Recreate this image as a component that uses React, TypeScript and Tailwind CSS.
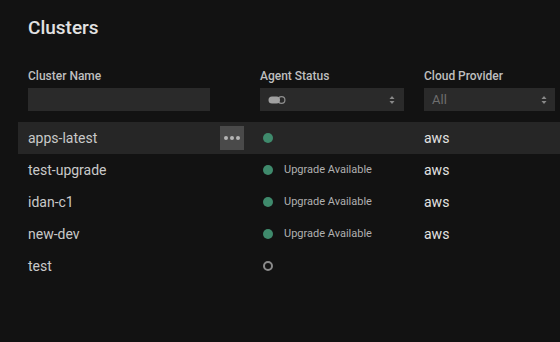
import React from "react";

const rows = [
  { name: "apps-latest", status: "ok", label: "", provider: "aws", active: true },
  { name: "test-upgrade", status: "ok", label: "Upgrade Available", provider: "aws" },
  { name: "idan-c1", status: "ok", label: "Upgrade Available", provider: "aws" },
  { name: "new-dev", status: "ok", label: "Upgrade Available", provider: "aws" },
  { name: "test", status: "none", label: "", provider: "" },
];

function Chevrons() {
  return (
    <svg width="6" height="10" viewBox="0 0 6 10" className="text-[#8a8a8a]">
      <path d="M0.5 4 L3 1 L5.5 4 Z" fill="currentColor" />
      <path d="M0.5 6 L3 9 L5.5 6 Z" fill="currentColor" />
    </svg>
  );
}

function ToggleIcon() {
  return (
    <svg width="18" height="8" viewBox="0 0 18 8">
      <circle cx="13.5" cy="4" r="3.4" fill="none" stroke="#8f8f8f" strokeWidth="1.2" />
      <rect x="0.5" y="0.5" width="11.5" height="7" rx="3.5" fill="#a0a0a0" />
    </svg>
  );
}

export default function App() {
  return (
    <div
      className="min-h-[342px] w-[560px] overflow-hidden bg-[#121212] pl-[18px] pt-[16px]"
      style={{ fontFamily: "Roboto, 'Liberation Sans', sans-serif" }}
    >
      <h1 className="pl-[10px] text-[19px] font-medium leading-[24px] text-[#e2e2e2]">Clusters</h1>

      <div className="mt-[28px] grid grid-cols-[232px_164px_1fr] pl-[10px]">
        <div className="flex flex-col">
          <span className="text-[12px] font-medium leading-[16px] text-[#bfbfbf]">Cluster Name</span>
          <div className="mt-[4px] h-[23px] w-[182px] bg-[#2a2a2a]" />
        </div>
        <div className="flex flex-col">
          <span className="text-[12px] font-medium leading-[16px] text-[#bfbfbf]">Agent Status</span>
          <div className="mt-[4px] flex h-[23px] w-[144px] items-center justify-between bg-[#2a2a2a] pl-[8px] pr-[9px]">
            <ToggleIcon />
            <Chevrons />
          </div>
        </div>
        <div className="flex flex-col">
          <span className="text-[12px] font-medium leading-[16px] text-[#bfbfbf]">Cloud Provider</span>
          <div className="mt-[4px] flex h-[23px] w-[131px] items-center justify-between bg-[#2a2a2a] pl-[8px] pr-[8px]">
            <span className="text-[13px] text-[#6e6e6e]">All</span>
            <Chevrons />
          </div>
        </div>
      </div>

      <div className="mt-[11px] flex flex-col">
        {rows.map((r) => (
          <div
            key={r.name}
            className={`grid h-[32px] grid-cols-[232px_164px_1fr] items-center pl-[10px] ${r.active ? "bg-[#262626]" : ""}`}
          >
            <div className="flex items-center justify-between pr-[16px]">
              <span className="text-[14px] text-[#c9c9c9]">{r.name}</span>
              {r.active && (
                <div className="flex h-[24px] w-[24px] items-center justify-center gap-[2px] bg-[#4a4a4a]">
                  <span className="h-[4px] w-[4px] rounded-full bg-[#b5b5b5]" />
                  <span className="h-[4px] w-[4px] rounded-full bg-[#b5b5b5]" />
                  <span className="h-[4px] w-[4px] rounded-full bg-[#b5b5b5]" />
                </div>
              )}
            </div>
            <div className="flex items-center pl-[3px]">
              {r.status === "ok" ? (
                <span className="h-[10px] w-[10px] rounded-full bg-[#3f8a6c]" />
              ) : (
                <span className="h-[10px] w-[10px] rounded-full border-2 border-[#8a8a8a]" />
              )}
              {r.label && <span className="ml-[11px] text-[11px] text-[#b0b0b0]">{r.label}</span>}
            </div>
            <div>
              <span className="text-[14px] text-[#e2e2e2]">{r.provider}</span>
            </div>
          </div>
        ))}
      </div>
    </div>
  );
}
